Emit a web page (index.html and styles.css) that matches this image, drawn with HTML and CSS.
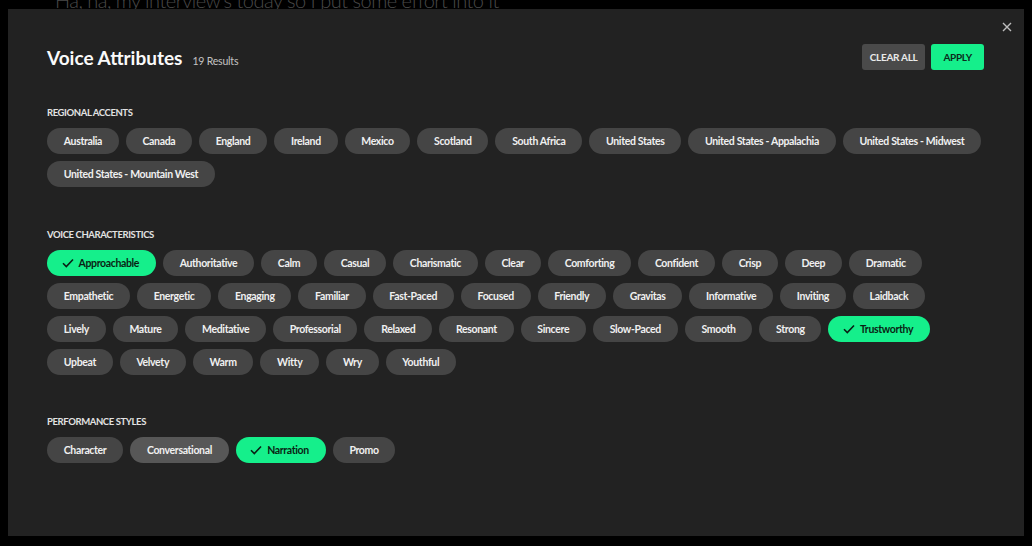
FILE: index.html
```html
<!DOCTYPE html>
<html lang="en">

<head>
    <meta charset="UTF-8">
    <meta name="viewport" content="width=device-width, initial-scale=1.0">
    <title>Voice Attributes</title>
    <link rel="stylesheet" href="styles.css">
</head>

<body>
    <p class="behind">Ha, ha, my interview’s today so I put some effort into it</p>

    <div class="modal">
        <button class="close" aria-label="Close">
            <svg width="10" height="10" viewBox="0 0 10 10"><path d="M1 1L9 9M9 1L1 9" stroke="currentColor" stroke-width="1.4" fill="none"/></svg>
        </button>

        <header>
            <div class="title">
                <h1>Voice Attributes</h1>
                <span class="count">19 Results</span>
            </div>
            <div class="actions">
                <button class="btn btn-clear">CLEAR ALL</button>
                <button class="btn btn-apply">APPLY</button>
            </div>
        </header>

        <section>
            <h2>REGIONAL ACCENTS</h2>
            <div class="pills">
                <button class="pill">Australia</button>
                <button class="pill">Canada</button>
                <button class="pill">England</button>
                <button class="pill">Ireland</button>
                <button class="pill">Mexico</button>
                <button class="pill">Scotland</button>
                <button class="pill">South Africa</button>
                <button class="pill">United States</button>
                <button class="pill">United States - Appalachia</button>
                <button class="pill">United States - Midwest</button>
                <button class="pill">United States - Mountain West</button>
            </div>
        </section>

        <section>
            <h2>VOICE CHARACTERISTICS</h2>
            <div class="pills">
                <button class="pill selected"><svg class="check" viewBox="0 0 12 10"><path d="M1 5.2L4.3 8.5L11 1.5" stroke="currentColor" stroke-width="1.6" fill="none"/></svg>Approachable</button>
                <button class="pill">Authoritative</button>
                <button class="pill">Calm</button>
                <button class="pill">Casual</button>
                <button class="pill">Charismatic</button>
                <button class="pill">Clear</button>
                <button class="pill">Comforting</button>
                <button class="pill">Confident</button>
                <button class="pill">Crisp</button>
                <button class="pill">Deep</button>
                <button class="pill">Dramatic</button>
                <button class="pill">Empathetic</button>
                <button class="pill">Energetic</button>
                <button class="pill">Engaging</button>
                <button class="pill">Familiar</button>
                <button class="pill">Fast-Paced</button>
                <button class="pill">Focused</button>
                <button class="pill">Friendly</button>
                <button class="pill">Gravitas</button>
                <button class="pill">Informative</button>
                <button class="pill">Inviting</button>
                <button class="pill">Laidback</button>
                <button class="pill">Lively</button>
                <button class="pill">Mature</button>
                <button class="pill">Meditative</button>
                <button class="pill">Professorial</button>
                <button class="pill">Relaxed</button>
                <button class="pill">Resonant</button>
                <button class="pill">Sincere</button>
                <button class="pill">Slow-Paced</button>
                <button class="pill">Smooth</button>
                <button class="pill">Strong</button>
                <button class="pill selected"><svg class="check" viewBox="0 0 12 10"><path d="M1 5.2L4.3 8.5L11 1.5" stroke="currentColor" stroke-width="1.6" fill="none"/></svg>Trustworthy</button>
                <button class="pill">Upbeat</button>
                <button class="pill">Velvety</button>
                <button class="pill">Warm</button>
                <button class="pill">Witty</button>
                <button class="pill">Wry</button>
                <button class="pill">Youthful</button>
            </div>
        </section>

        <section>
            <h2>PERFORMANCE STYLES</h2>
            <div class="pills">
                <button class="pill">Character</button>
                <button class="pill hover">Conversational</button>
                <button class="pill selected"><svg class="check" viewBox="0 0 12 10"><path d="M1 5.2L4.3 8.5L11 1.5" stroke="currentColor" stroke-width="1.6" fill="none"/></svg>Narration</button>
                <button class="pill">Promo</button>
            </div>
        </section>
    </div>
</body>

</html>
```

FILE: styles.css
```css
* {
    box-sizing: border-box;
    margin: 0;
    padding: 0;
}

body {
    font-family: 'Lato', 'Liberation Sans', sans-serif;
    background-color: #000;
    color: #fff;
    overflow: hidden;
    padding: 9px 8px 10px 8px;
    height: 546px;
}

button {
    font-family: inherit;
    border: none;
    cursor: pointer;
}

/* page text peeking out above the modal */
.behind {
    position: absolute;
    top: -12px;
    left: 55px;
    font-size: 20px;
    font-weight: 300;
    letter-spacing: -0.5px;
    color: #4a4a4a;
}

.modal {
    position: relative;
    background-color: #222222;
    height: 527px;
    padding: 35px 40px 0 39px;
}

.close {
    position: absolute;
    top: 11px;
    right: 10px;
    background: none;
    color: #bdbdbd;
    width: 14px;
    height: 14px;
    display: flex;
    align-items: center;
    justify-content: center;
}

header {
    display: flex;
    justify-content: space-between;
    align-items: center;
    height: 26px;
    margin-bottom: 36px;
}

.title {
    display: flex;
    align-items: baseline;
}

.title h1 {
    font-size: 19px;
    font-weight: 700;
    color: #fafafa;
}

.count {
    font-size: 10.5px;
    color: #c4c4c4;
    margin-left: 10px;
    letter-spacing: -0.2px;
}

.actions {
    display: flex;
    gap: 6px;
}

.btn {
    height: 26px;
    padding: 0 8px;
    border-radius: 3px;
    font-size: 10px;
    font-weight: 700;
    letter-spacing: -0.3px;
}

.btn-clear {
    background-color: #4a4a4a;
    color: #eaeaea;
}

.btn-apply {
    background-color: #15ef8b;
    color: #0c2a1c;
    padding: 0 12px;
}

section {
    margin-bottom: 40.5px;
}

h2 {
    font-size: 9.5px;
    font-weight: 700;
    color: #e2e2e2;
    line-height: 14px;
    letter-spacing: -0.4px;
    margin-bottom: 8px;
}

.pills {
    display: flex;
    flex-wrap: wrap;
    gap: 7px;
}

.pill {
    display: flex;
    align-items: center;
    height: 26px;
    padding: 0 16.75px;
    border-radius: 13px;
    background-color: #454545;
    color: #f0f0f0;
    font-size: 10.5px;
    font-weight: 700;
    letter-spacing: -0.35px;
}

.pill.hover {
    background-color: #575757;
}

.pill.selected {
    background-color: #15ef8b;
    color: #0a1f14;
    padding-left: 14.5px;
}

.check {
    width: 12px;
    height: 10px;
    margin-right: 5px;
}
```
